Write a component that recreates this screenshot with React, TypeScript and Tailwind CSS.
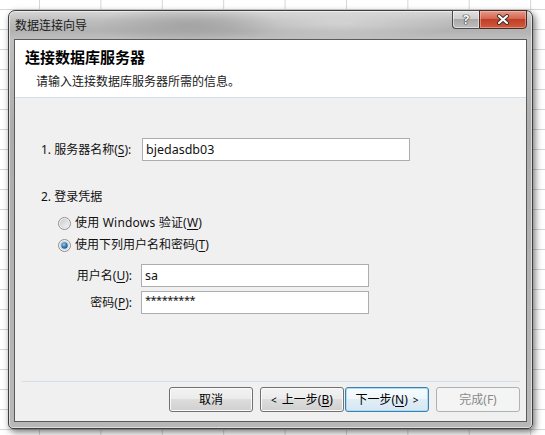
import React from "react";

const FONT = {
  fontFamily: '"Noto Sans", "Noto Sans CJK SC", sans-serif',
};

function Radio({ checked }: { checked?: boolean }) {
  return (
    <svg width="13" height="13" viewBox="0 0 13 13" className="shrink-0">
      <defs>
        <linearGradient id="rgo" x1="0" y1="0" x2="1" y2="1">
          <stop offset="0" stopColor="#c9c9c9" />
          <stop offset="1" stopColor="#f7f7f7" />
        </linearGradient>
        <radialGradient id="rgd" cx="0.4" cy="0.35" r="0.7">
          <stop offset="0" stopColor="#9fd1f2" />
          <stop offset="0.45" stopColor="#3d89c9" />
          <stop offset="1" stopColor="#1b4f86" />
        </radialGradient>
      </defs>
      <circle cx="6.5" cy="6.5" r="6" fill="#f4f4f4" stroke="#8f8f8f" strokeWidth="1" />
      <circle cx="6.5" cy="6.5" r="4.3" fill="url(#rgo)" stroke="#d0d0d0" strokeWidth="0.6" />
      {checked && <circle cx="6.5" cy="6.5" r="3.2" fill="url(#rgd)" />}
    </svg>
  );
}

function U({ children }: { children: React.ReactNode }) {
  return <span className="underline underline-offset-[2px]">{children}</span>;
}

function Btn({
  children,
  variant,
}: {
  children: React.ReactNode;
  variant?: "focus" | "disabled";
}) {
  const base =
    "w-[84px] h-[25px] rounded-[3px] border flex items-center justify-center text-[12px] leading-[16px]";
  if (variant === "disabled")
    return (
      <div className={base + " border-[#adb2b5] bg-[#f4f4f4] text-[#8a8a8a]"}>{children}</div>
    );
  if (variant === "focus")
    return (
      <div
        className={
          base +
          " border-[#3c7fb1] text-black shadow-[inset_0_0_0_1px_#a9dcf6] bg-[linear-gradient(to_bottom,#f6fbfe_0%,#eef6fb_50%,#e0edf6_50%,#d6e7f3_100%)]"
        }
      >
        {children}
      </div>
    );
  return (
    <div
      className={
        base +
        " border-[#707070] text-black shadow-[inset_0_0_0_1px_#fbfbfb] bg-[linear-gradient(to_bottom,#f2f2f2_0%,#ebebeb_50%,#dddddd_50%,#cfcfcf_100%)]"
      }
    >
      {children}
    </div>
  );
}

export default function App() {
  return (
    <div
      style={FONT}
      className="w-[545px] h-[435px] overflow-hidden bg-white pl-[8px] pt-[10px] [background-image:linear-gradient(to_right,#d6d6d6_1px,transparent_1px),linear-gradient(to_bottom,#d6d6d6_1px,transparent_1px)] [background-size:61.4px_20px] [background-position:39px_9px]"
    >
      {/* window */}
      <div className="w-[525px] h-[419px] rounded-t-[7px] rounded-b-[5px] border border-[#3f3f3f] flex flex-col shadow-[2px_3px_7px_rgba(0,0,0,0.55),inset_0_0_0_1px_rgba(255,255,255,0.55)] bg-[linear-gradient(to_bottom,#d6d6d6_0px,#bdbdbd_10px,#b2b2b2_20px,#bfbfbf_28px,#acacac_120px,#b8b8b8_419px)]">
        {/* title bar */}
        <div className="h-[28px] flex items-start shrink-0 rounded-t-[6px] bg-[radial-gradient(ellipse_90px_20px_at_180px_14px,rgba(150,150,150,0.6),transparent),radial-gradient(ellipse_120px_18px_at_330px_12px,rgba(235,235,235,0.5),transparent)]">
          <div className="pl-[6px] h-[28px] flex items-center text-[12px] leading-[16px] text-[#1a1a1a] pt-[1px]">
            数据连接向导
          </div>
          <div className="ml-auto mr-[5px] -mt-[1px] flex h-[19px]">
            <div className="w-[27px] h-[19px] border border-[#4a4a4a] border-r-0 rounded-bl-[4px] flex items-center justify-center bg-[linear-gradient(to_bottom,#e2e2e2_0%,#cdcdcd_45%,#a9a9a9_50%,#bebebe_100%)] shadow-[inset_0_0_0_1px_rgba(255,255,255,0.5)]">
              <span className="text-[13px] leading-[13px] font-bold text-white [text-shadow:0_0_1px_#222,0_0_1px_#222,0_0_1px_#222]">
                ?
              </span>
            </div>
            <div className="w-[48px] h-[19px] border border-[#4a2a22] rounded-br-[4px] flex items-center justify-center bg-[linear-gradient(to_bottom,#e59a8a_0%,#d4664f_45%,#c03e26_50%,#cf5a3f_100%)] shadow-[inset_0_0_0_1px_rgba(255,210,200,0.45)]">
              <svg width="14" height="11" viewBox="0 0 14 11">
                <path d="M3 2 L11 9 M11 2 L3 9" stroke="#3b2a26" strokeWidth="4" strokeLinecap="round" />
                <path d="M3 2 L11 9 M11 2 L3 9" stroke="#ffffff" strokeWidth="2.2" strokeLinecap="round" />
              </svg>
            </div>
          </div>
        </div>

        {/* content */}
        <div className="mx-[5px] mb-[6px] flex-1 border border-[#5a5a5a] flex flex-col text-[#111]">
          {/* header */}
          <div className="h-[58px] bg-white border-b border-[#d5dfe5] shrink-0">
            <div className="pl-[10px] pt-[7px] text-[15px] leading-[20px] font-bold text-black">
              连接数据库服务器
            </div>
            <div className="pl-[21px] mt-[7px] text-[12px] leading-[16px] text-[#1a1a1a]">
              请输入连接数据库服务器所需的信息。
            </div>
          </div>

          {/* body */}
          <div className="flex-1 bg-[#f0f0f0] flex flex-col text-[12px] leading-[16px]">
            <div className="pt-[40px] pl-[26px] flex items-center">
              <div className="w-[101px]">
                1. 服务器名称(<U>S</U>):
              </div>
              <div className="w-[268px] h-[23px] bg-white border border-[#abadb3] flex items-center pl-[3px] text-[12.5px]">
                bjedasdb03
              </div>
            </div>

            <div className="mt-[28px] pl-[26px]">2. 登录凭据</div>

            <div className="mt-[10px] pl-[43px] flex items-center gap-[4px]">
              <Radio />
              <span className="tracking-[0.2px]">
                使用 Windows 验证(<U>W</U>)
              </span>
            </div>
            <div className="mt-[6px] pl-[43px] flex items-center gap-[4px]">
              <Radio checked />
              <span>
                使用下列用户名和密码(<U>T</U>)
              </span>
            </div>

            <div className="mt-[11px] flex items-center">
              <div className="w-[117px] text-right">
                用户名(<U>U</U>):
              </div>
              <div className="ml-[9px] w-[228px] h-[23px] bg-white border border-[#abadb3] flex items-center pl-[3px] text-[12.5px]">
                sa
              </div>
            </div>
            <div className="mt-[4px] flex items-center">
              <div className="w-[117px] text-right">
                密码(<U>P</U>):
              </div>
              <div className="ml-[9px] w-[228px] h-[23px] bg-white border border-[#abadb3] flex items-start pt-[2px] pl-[3px] text-[11px] leading-[12px] tracking-[-0.5px]">
                *********
              </div>
            </div>

            <div className="mt-auto">
              <div className="ml-[7px] mr-[6px] h-px bg-[#d5dfe5]" />
              <div className="mt-[5px] pb-[9px] pr-[6px] flex justify-end">
                <Btn>取消</Btn>
                <div className="ml-[7px]">
                  <Btn>
                    <span className="mr-[5px] text-[10px]">&lt;</span>上一步(<U>B</U>)
                  </Btn>
                </div>
                <div className="ml-[1px]">
                  <Btn variant="focus">
                    下一步(<U>N</U>)<span className="ml-[5px] text-[10px]">&gt;</span>
                  </Btn>
                </div>
                <div className="ml-[7px]">
                  <Btn variant="disabled">完成(F)</Btn>
                </div>
              </div>
            </div>
          </div>
        </div>
      </div>
    </div>
  );
}
